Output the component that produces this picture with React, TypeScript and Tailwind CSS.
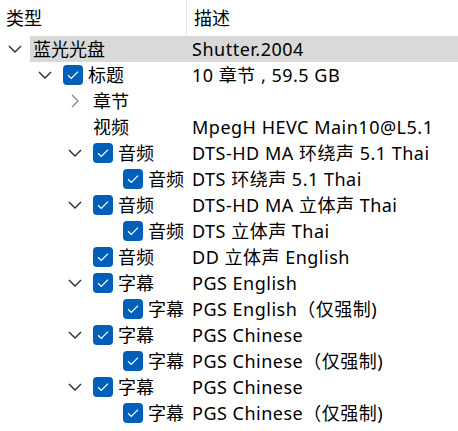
import React from "react";

type Row = {
  level: number;
  chev: "down" | "right" | null;
  check: boolean;
  label: string;
  desc: string;
  hl?: boolean;
};

const rows: Row[] = [
  { level: 0, chev: "down", check: false, label: "蓝光光盘", desc: "Shutter.2004", hl: true },
  { level: 1, chev: "down", check: true, label: "标题", desc: "10 章节 , 59.5 GB" },
  { level: 2, chev: "right", check: false, label: "章节", desc: "" },
  { level: 2, chev: null, check: false, label: "视频", desc: "MpegH HEVC Main10@L5.1" },
  { level: 2, chev: "down", check: true, label: "音频", desc: "DTS-HD MA 环绕声 5.1 Thai" },
  { level: 3, chev: null, check: true, label: "音频", desc: "DTS 环绕声 5.1 Thai" },
  { level: 2, chev: "down", check: true, label: "音频", desc: "DTS-HD MA 立体声 Thai" },
  { level: 3, chev: null, check: true, label: "音频", desc: "DTS 立体声 Thai" },
  { level: 2, chev: null, check: true, label: "音频", desc: "DD 立体声 English" },
  { level: 2, chev: "down", check: true, label: "字幕", desc: "PGS English" },
  { level: 3, chev: null, check: true, label: "字幕", desc: "PGS English（仅强制)" },
  { level: 2, chev: "down", check: true, label: "字幕", desc: "PGS Chinese" },
  { level: 3, chev: null, check: true, label: "字幕", desc: "PGS Chinese（仅强制)" },
  { level: 2, chev: "down", check: true, label: "字幕", desc: "PGS Chinese" },
  { level: 3, chev: null, check: true, label: "字幕", desc: "PGS Chinese（仅强制)" },
];

const indents = ["w-0", "w-[30px]", "w-[60px]", "w-[90px]"];

function Chevron({ dir }: { dir: "down" | "right" }) {
  if (dir === "down")
    return (
      <svg width="14" height="8" viewBox="0 0 14 8" fill="none">
        <path d="M1 1 L7 7 L13 1" stroke="#2b2b2b" strokeWidth="1.4" />
      </svg>
    );
  return (
    <svg width="8" height="14" viewBox="0 0 8 14" fill="none">
      <path d="M1 1 L7 7 L1 13" stroke="#8a8a8a" strokeWidth="1.4" />
    </svg>
  );
}

function Check() {
  return (
    <div className="w-[20px] h-[20px] rounded-[4px] bg-[#0060b9] flex items-center justify-center shrink-0">
      <svg width="12" height="10" viewBox="0 0 12 10" fill="none">
        <path d="M1 5.2 L4.3 8.4 L11 1.6" stroke="#ffffff" strokeWidth="1.2" />
      </svg>
    </div>
  );
}

export default function App() {
  return (
    <div
      className="w-[458px] h-[431px] bg-white text-black text-[18px] leading-none overflow-hidden"
      style={{ fontFamily: '"Noto Sans", "Noto Sans CJK SC", sans-serif' }}
    >
      <div className="flex h-[35px] items-center">
        <div className="w-[187px] h-full flex items-center pl-[6px] border-r border-[#e5e5e5]">类型</div>
        <div className="pl-[7px]">描述</div>
      </div>
      <div className="h-px" />
      {rows.map((r, i) => (
        <div key={i} className="flex h-[26px] items-center">
          <div className={indents[r.level] + " shrink-0"} />
          <div className="w-[30px] h-full flex items-center justify-center shrink-0">
            {r.chev && <Chevron dir={r.chev} />}
          </div>
          <div className={"flex-1 h-full flex items-center " + (r.hl ? "bg-[#d9d9d9]" : "")}>
            <div
              className={
                "h-full flex items-center whitespace-nowrap pl-[3px] " +
                (r.level === 0 ? "w-[162px]" : r.level === 1 ? "w-[132px]" : r.level === 2 ? "w-[102px]" : "w-[72px]")
              }
            >
              {r.check && (
                <div className="mr-[5px]">
                  <Check />
                </div>
              )}
              <span>{r.label}</span>
            </div>
            <div className="whitespace-nowrap tracking-[0.5px]">{r.desc}</div>
          </div>
        </div>
      ))}
    </div>
  );
}
